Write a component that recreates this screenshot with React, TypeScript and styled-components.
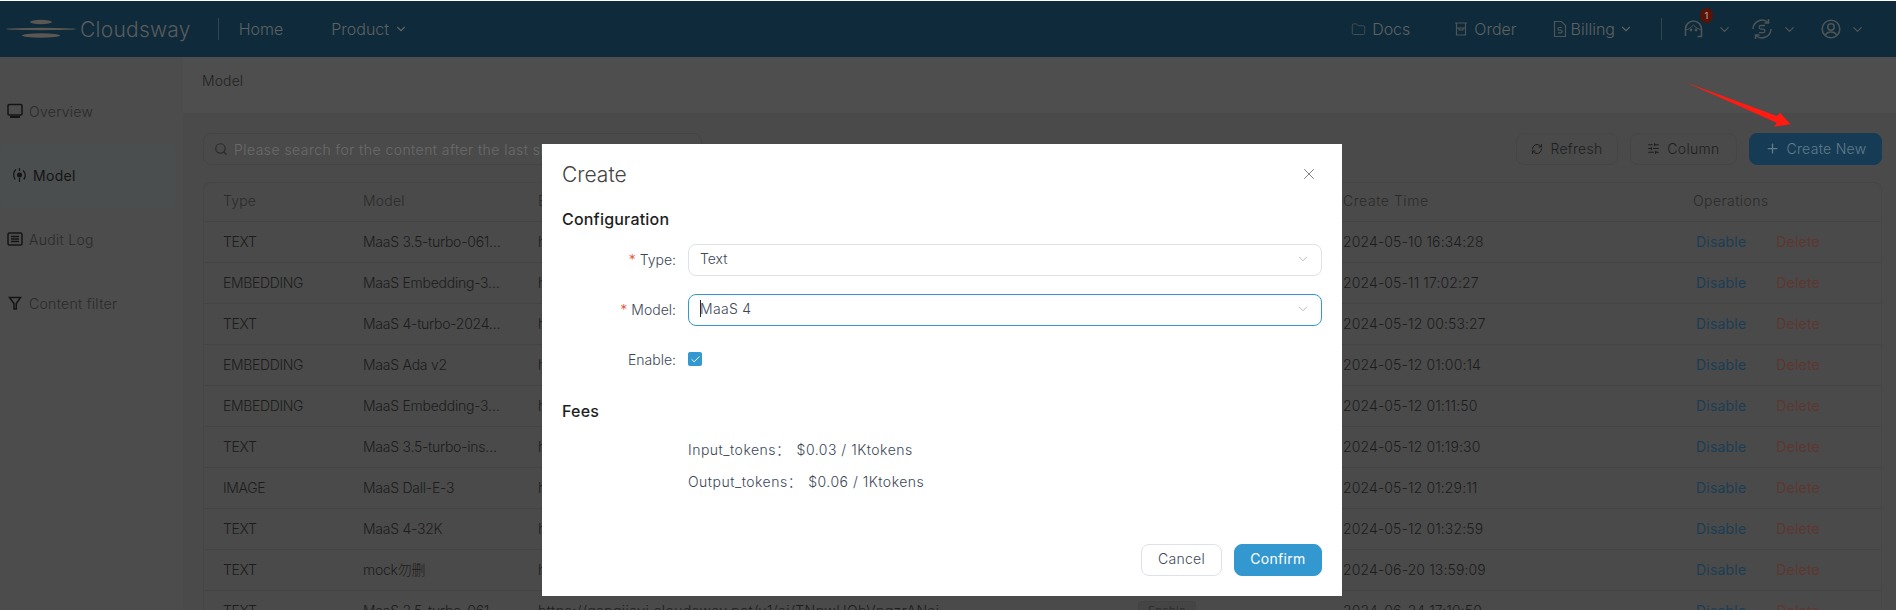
import React from "react";
import styled, { createGlobalStyle } from "styled-components";
import {
  Check,
  ChevronDown,
  Folder,
  Plus,
  RefreshCw,
  Search,
  SlidersHorizontal,
  X,
} from "lucide-react";

const FONT = `Inter, "Noto Sans CJK SC", sans-serif`;

const GlobalStyle = createGlobalStyle`
  html, body {
    margin: 0;
    height: 100%;
    overflow: hidden;
    background: #fff;
  }
  body {
    padding-top: 1px;
    box-sizing: border-box;
    font-family: ${FONT};
    font-weight: 300;
  }
  #root { height: 100%; }
`;

const Page = styled.div`
  display: flex;
  flex-direction: column;
  height: 100%;
  background: #4b4b4b;
  overflow: hidden;
`;

const TopBar = styled.header`
  display: flex;
  align-items: center;
  flex: 0 0 56px;
  padding: 0 31px 0 6px;
  background: #0f2a3a;
  color: #5d6263;
  font-size: 16px;
`;

const Logo = styled.div`
  display: flex;
  align-items: center;
  gap: 3px;
  font-size: 21px;
  letter-spacing: 0.25px;
  color: #5a5c5d;
`;

const Divider = styled.span<{ $margin: string }>`
  width: 1px;
  height: 22px;
  background: #33454f;
  margin: ${(p) => p.$margin};
`;

const NavItem = styled.div<{ $gap?: number; $left?: number }>`
  display: flex;
  align-items: center;
  gap: ${(p) => p.$gap ?? 5}px;
  margin-left: ${(p) => p.$left ?? 0}px;
  white-space: nowrap;
`;

const Push = styled.div`
  flex: 1;
`;

const IconHolder = styled.span`
  position: relative;
  display: inline-flex;
`;

const Badge = styled.span`
  position: absolute;
  top: -11px;
  right: -9px;
  width: 13px;
  height: 15px;
  border-radius: 50%;
  background: #5a1206;
  color: #a58f8a;
  font-size: 9px;
  font-weight: 600;
  line-height: 15px;
  text-align: center;
`;

const Body = styled.div`
  display: flex;
  flex: 1;
  min-height: 0;
`;

const Sidebar = styled.aside`
  flex: 0 0 183px;
  padding-top: 23px;
  background: #4c4c4c;
  box-sizing: border-box;
`;

const SideItem = styled.div<{ $active?: boolean }>`
  display: flex;
  align-items: center;
  gap: 6px;
  height: 64px;
  margin-right: 7px;
  padding-left: ${(p) => (p.$active ? 12 : 7)}px;
  padding-bottom: 2px;
  box-sizing: border-box;
  border-radius: 8px;
  background: ${(p) => (p.$active ? "#4a4e4e" : "transparent")};
  color: ${(p) => (p.$active ? "#141414" : "#2a2a2a")};
  font-size: 14px;
  font-weight: ${(p) => (p.$active ? 400 : 300)};
  letter-spacing: 0.3px;
`;

const Main = styled.main`
  flex: 1;
  min-width: 0;
  display: flex;
  flex-direction: column;
`;

const Crumb = styled.div`
  flex: 0 0 56px;
  padding: 15px 19px 0;
  box-sizing: border-box;
  background: #4e4e4e;
  color: #222;
  font-size: 14px;
  letter-spacing: 0.1px;
`;

const Content = styled.div`
  padding: 20px 14px 0 20px;
  background: #4a4a4a;
  flex: 1;
`;

const Toolbar = styled.div`
  display: flex;
  align-items: center;
  gap: 12px;
  height: 32px;
  margin-bottom: 17px;
`;

const SearchBox = styled.div`
  display: flex;
  align-items: center;
  gap: 6px;
  width: 499px;
  height: 32px;
  padding-left: 10px;
  box-sizing: border-box;
  border: 1px solid #444;
  border-radius: 8px;
  color: #2b2b2b;
  font-size: 14px;
  white-space: nowrap;
  overflow: hidden;
`;

const Placeholder = styled.span`
  color: #6a6a6a;
  letter-spacing: 0.45px;
`;

const Action = styled.button<{ $primary?: boolean; $w: number }>`
  display: flex;
  align-items: center;
  justify-content: center;
  gap: 7px;
  width: ${(p) => p.$w}px;
  height: 32px;
  padding: 0 0 1px;
  border: 1px solid ${(p) => (p.$primary ? "#163c55" : "#454545")};
  border-radius: 8px;
  background: ${(p) => (p.$primary ? "#163c55" : "transparent")};
  color: ${(p) => (p.$primary ? "#627b8a" : "#1e1e1e")};
  font-family: ${FONT};
  font-size: 14px;
  font-weight: 300;
  letter-spacing: 0.3px;
`;

const Table = styled.div`
  border: 1px solid #464646;
  border-bottom: 0;
  border-radius: 8px 8px 0 0;
`;

const Row = styled.div<{ $head?: boolean }>`
  display: grid;
  grid-template-columns: 140px 175px 600px 205px 350px 1fr;
  align-items: center;
  height: ${(p) => (p.$head ? 39 : 41)}px;
  padding-left: 19px;
  padding-bottom: ${(p) => (p.$head ? 3 : 2)}px;
  box-sizing: border-box;
  border-bottom: 1px solid #444;
  color: ${(p) => (p.$head ? "#2a2a2a" : "#1c1c1c")};
  font-size: 14px;
`;

const Cell = styled.div<{ $track?: number }>`
  overflow: hidden;
  white-space: nowrap;
  letter-spacing: ${(p) => p.$track ?? 0}px;
`;

const StatusTag = styled.span`
  display: inline-block;
  padding: 1px 9px;
  border: 1px solid #424242;
  border-radius: 4px;
  background: #454545;
  color: #2a2a2a;
  font-size: 12px;
`;

const OpLink = styled.span<{ $danger?: boolean }>`
  margin: 0 27px 0 3px;
  letter-spacing: 0.2px;
  font-weight: 400;
  color: ${(p) => (p.$danger ? "#5e3630" : "#1a3d55")};
`;

const Modal = styled.section`
  position: fixed;
  left: 542px;
  top: 144px;
  width: 800px;
  height: 452px;
  padding: 20px 20px 20px;
  box-sizing: border-box;
  display: flex;
  flex-direction: column;
  background: #fff;
  color: #3c4757;
  font-size: 14px;
`;

const ModalHead = styled.div`
  display: flex;
  align-items: center;
  justify-content: space-between;
  height: 20px;
  padding-right: 4px;
  color: #444;
  font-size: 21px;
`;

const Heading = styled.h3<{ $top: number; $bottom: number }>`
  margin: ${(p) => p.$top}px 0 ${(p) => p.$bottom}px;
  color: #1e1e1e;
  font-size: 16px;
  font-weight: 500;
  line-height: 20px;
  letter-spacing: 0.2px;
`;

const FormRow = styled.div`
  display: grid;
  grid-template-columns: 114px 634px;
  column-gap: 12px;
  align-items: center;
  height: 32px;
  margin-bottom: 18px;
`;

const Label = styled.label`
  position: relative;
  top: -1px;
  text-align: right;
`;

const Required = styled.span`
  margin-right: 4px;
  color: #e2512f;
`;

const Select = styled.div<{ $focus?: boolean }>`
  display: flex;
  align-items: center;
  justify-content: space-between;
  height: 32px;
  padding: 0 11px 3px;
  box-sizing: border-box;
  border: 1px solid ${(p) => (p.$focus ? "#3498d0" : "#dfe1ea")};
  border-radius: 8px;
`;

const Caret = styled.span`
  width: 1px;
  height: 17px;
  margin-right: -1px;
  background: #1e2a38;
`;

const SelectValue = styled.span`
  display: flex;
  align-items: center;
  letter-spacing: 0.3px;
`;

const CheckBox = styled.span`
  display: flex;
  align-items: center;
  justify-content: center;
  width: 14px;
  height: 14px;
  margin-top: -2px;
  border-radius: 2px;
  background: #3498d0;
  color: #fff;
`;

const Fee = styled.div`
  margin-left: 126px;
  height: 32px;
  line-height: 30px;
  letter-spacing: 0.5px;
`;

const FeeValue = styled.span`
  margin-left: 6px;
`;

const Footer = styled.div`
  display: flex;
  justify-content: flex-end;
  gap: 12px;
  margin-top: auto;
`;

const FooterButton = styled.button<{ $primary?: boolean; $w: number }>`
  width: ${(p) => p.$w}px;
  height: 32px;
  padding: 0 0 3px;
  border: 1px solid ${(p) => (p.$primary ? "#3498d0" : "#dfe1ea")};
  border-radius: 8px;
  background: ${(p) => (p.$primary ? "#3498d0" : "#fff")};
  color: ${(p) => (p.$primary ? "#fff" : "#3c4757")};
  font-family: ${FONT};
  font-size: 14px;
  font-weight: ${(p) => (p.$primary ? 400 : 300)};
  letter-spacing: 0.3px;
`;

const ArrowMark = styled.svg`
  position: fixed;
  left: 1680px;
  top: 78px;
`;

function LogoMark() {
  return (
    <svg width="71" height="22" viewBox="0 0 71 22" fill="#5b5853">
      <ellipse cx="35" cy="4" rx="11" ry="2.2" />
      <ellipse cx="35" cy="11" rx="35" ry="1.2" />
      <ellipse cx="35" cy="17.5" rx="19" ry="2.2" />
    </svg>
  );
}

function OverviewIcon() {
  return (
    <svg width="16" height="16" viewBox="0 0 16 16" fill="none">
      <rect x="1" y="1.5" width="14" height="10.5" rx="1.2" stroke="#141414" strokeWidth="1.5" />
      <rect x="3" y="13" width="10" height="2" fill="#141414" />
    </svg>
  );
}

function ModelIcon() {
  return (
    <svg width="15" height="16" viewBox="0 0 15 16" fill="none" stroke="#141414" strokeWidth="1.2">
      <path d="M4 2.5C1.5 4 .6 8.5 3.2 12.5" />
      <path d="M11 3.5c2.7 2 3 6.5.7 9" />
      <path d="M7.5 1v3" />
      <circle cx="7.5" cy="8" r="2.5" fill="#141414" stroke="none" />
      <path d="M7.5 11v4" />
    </svg>
  );
}

function AuditIcon() {
  return (
    <svg width="16" height="16" viewBox="0 0 16 16" fill="none" stroke="#141414">
      <rect x="1" y="2" width="14" height="12" rx="1.5" strokeWidth="1.5" />
      <path d="M4 5.5h8M4 8h8M4 10.5h8" strokeWidth="1.3" />
    </svg>
  );
}

function FilterIcon() {
  return (
    <svg width="16" height="16" viewBox="0 0 16 16" fill="none" stroke="#141414" strokeWidth="1.5">
      <path d="M2.5 2.5h11L9.3 8.5V14H7V8.5z" />
    </svg>
  );
}

function OrderIcon() {
  return (
    <svg width="16" height="16" viewBox="0 0 16 16" fill="none" stroke="#4d5557" strokeWidth="1.2">
      <path d="M2 2h12M3.5 2v12h9V2M3.5 7h9" />
      <path d="M6 7v2h4V7" />
    </svg>
  );
}

function BillingIcon() {
  return (
    <svg width="14" height="18" viewBox="0 0 14 18" fill="none" stroke="#4d5557" strokeWidth="1.2">
      <path d="M1.5 1.5h7l4 4v11h-11z" />
      <path d="M9 7.5H6.2a1.2 1.2 0 0 0 0 2.7h1.6a1.2 1.2 0 0 1 0 2.7H5" />
    </svg>
  );
}

function AgentIcon() {
  return (
    <svg width="20" height="20" viewBox="0 0 20 20" fill="none" stroke="#4d5557" strokeWidth="1.6">
      <path d="M1.5 17v-7a8 8 0 0 1 16 0v7.5h-4" />
      <path d="M1.5 11c2 0 5-2 8-5 2 3 5 4 8 5" strokeWidth="1" />
      <circle cx="7" cy="11" r=".6" />
      <circle cx="12" cy="11" r=".6" />
    </svg>
  );
}

function CurrencyIcon() {
  return (
    <svg width="22" height="22" viewBox="0 0 22 22" fill="none" stroke="#4d5557" strokeWidth="1.5">
      <path d="M2 11a9 9 0 0 1 15-6.5M20 11a9 9 0 0 1-15 6.5" />
      <path d="M17.5 1v4h-4M4.5 21v-4h4" />
      <path d="M14 7.5h-4a1.8 1.8 0 0 0 0 3.6h2a1.8 1.8 0 0 1 0 3.6H8" strokeWidth="1.3" />
    </svg>
  );
}

function UserIcon() {
  return (
    <svg width="20" height="20" viewBox="0 0 20 20" fill="none" stroke="#4d5557" strokeWidth="1.6">
      <circle cx="10" cy="10" r="8.8" />
      <circle cx="10" cy="8" r="3.2" />
      <path d="M4.5 16c1-2.2 3-3 5.5-3s4.5.8 5.500 3" />
    </svg>
  );
}

const URL_TEXT = "https://gangjiayi.cloudsway.net/v1/ai/TNpwUQbVnqzrANai";

const ROWS = [
  ["TEXT", "MaaS 3.5-turbo-061…", "2024-05-10 16:34:28"],
  ["EMBEDDING", "MaaS Embedding-3…", "2024-05-11 17:02:27"],
  ["TEXT", "MaaS 4-turbo-2024…", "2024-05-12 00:53:27"],
  ["EMBEDDING", "MaaS Ada v2", "2024-05-12 01:00:14"],
  ["EMBEDDING", "MaaS Embedding-3…", "2024-05-12 01:11:50"],
  ["TEXT", "MaaS 3.5-turbo-ins…", "2024-05-12 01:19:30"],
  ["IMAGE", "MaaS Dall-E-3", "2024-05-12 01:29:11"],
  ["TEXT", "MaaS 4-32K", "2024-05-12 01:32:59"],
  ["TEXT", "mock勿删", "2024-06-20 13:59:09"],
  ["TEXT", "MaaS 3.5-turbo-061…", "2024-06-24 17:10:50"],
];

export default function App() {
  return (
    <>
      <GlobalStyle />
      <Page>
        <TopBar>
          <Logo>
            <LogoMark />
            Cloudsway
          </Logo>
          <Divider $margin="0 20px 0 27px" />
          <NavItem>Home</NavItem>
          <NavItem $left={48}>
            Product <ChevronDown size={14} />
          </NavItem>
          <Push />
          <NavItem $gap={6}>
            <Folder size={15} strokeWidth={1.3} color="#4d5557" /> Docs
          </NavItem>
          <NavItem $left={43}>
            <OrderIcon /> Order
          </NavItem>
          <NavItem $left={36} $gap={4}>
            <BillingIcon /> Billing <ChevronDown size={14} />
          </NavItem>
          <Divider $margin="0 22px 0 28px" />
          <NavItem $gap={13}>
            <IconHolder>
              <AgentIcon />
              <Badge>1</Badge>
            </IconHolder>
            <ChevronDown size={15} color="#4d5557" />
          </NavItem>
          <NavItem $left={19} $gap={9}>
            <CurrencyIcon />
            <ChevronDown size={15} color="#4d5557" />
          </NavItem>
          <NavItem $left={24} $gap={9}>
            <UserIcon />
            <ChevronDown size={15} color="#4d5557" />
          </NavItem>
        </TopBar>
        <Body>
          <Sidebar>
            <SideItem>
              <OverviewIcon /> Overview
            </SideItem>
            <SideItem $active>
              <ModelIcon /> Model
            </SideItem>
            <SideItem>
              <AuditIcon /> Audit Log
            </SideItem>
            <SideItem>
              <FilterIcon /> Content filter
            </SideItem>
          </Sidebar>
          <Main>
            <Crumb>Model</Crumb>
            <Content>
              <Toolbar>
                <SearchBox>
                  <Search size={14} />
                  <Placeholder>
                    Please search for the content after the last slash in the url
                  </Placeholder>
                </SearchBox>
                <Push />
                <Action $w={102}>
                  <RefreshCw size={12} /> Refresh
                </Action>
                <Action $w={107}>
                  <SlidersHorizontal size={13} /> Column
                </Action>
                <Action $primary $w={133}>
                  <Plus size={15} /> Create New
                </Action>
              </Toolbar>
              <Table>
                <Row $head>
                  <Cell $track={0.2}>Type</Cell>
                  <Cell $track={0.2}>Model</Cell>
                  <Cell>Endpoint</Cell>
                  <Cell>Status</Cell>
                  <Cell $track={0.55}>Create Time</Cell>
                  <Cell $track={0.45}>Operations</Cell>
                </Row>
                {ROWS.map(([type, model, time]) => (
                  <Row key={time}>
                    <Cell $track={-0.35}>{type}</Cell>
                    <Cell $track={-0.25}>{model}</Cell>
                    <Cell $track={0.45}>{URL_TEXT}</Cell>
                    <Cell>
                      <StatusTag>Enable</StatusTag>
                    </Cell>
                    <Cell $track={0.12}>{time}</Cell>
                    <Cell>
                      <OpLink>Disable</OpLink>
                      <OpLink $danger>Delete</OpLink>
                    </Cell>
                  </Row>
                ))}
              </Table>
            </Content>
          </Main>
        </Body>
      </Page>
      <Modal>
        <ModalHead>
          Create
          <X size={18} strokeWidth={1} color="#555" />
        </ModalHead>
        <Heading $top={25} $bottom={15}>
          Configuration
        </Heading>
        <FormRow>
          <Label>
            <Required>*</Required>Type:
          </Label>
          <Select>
            Text
            <ChevronDown size={14} strokeWidth={1} color="#888" />
          </Select>
        </FormRow>
        <FormRow>
          <Label>
            <Required>*</Required>Model:
          </Label>
          <Select $focus>
            <SelectValue>
              <Caret />
              MaaS 4
            </SelectValue>
            <ChevronDown size={14} strokeWidth={1} color="#888" />
          </Select>
        </FormRow>
        <FormRow>
          <Label>Enable:</Label>
          <CheckBox>
            <Check size={11} strokeWidth={2} />
          </CheckBox>
        </FormRow>
        <Heading $top={7} $bottom={14}>
          Fees
        </Heading>
        <Fee>
          Input_tokens：<FeeValue>$0.03 / 1Ktokens</FeeValue>
        </Fee>
        <Fee>
          Output_tokens：<FeeValue>$0.06 / 1Ktokens</FeeValue>
        </Fee>
        <Footer>
          <FooterButton $w={81}>Cancel</FooterButton>
          <FooterButton $primary $w={88}>
            Confirm
          </FooterButton>
        </Footer>
      </Modal>
      <ArrowMark width="116" height="52" viewBox="0 0 116 52">
        <path d="M5 4 L97 38 L100 34.700 L110.700 46.300 L94 48.700 L96.700 44.700 Z" fill="#ff1a12" />
      </ArrowMark>
    </>
  );
}
